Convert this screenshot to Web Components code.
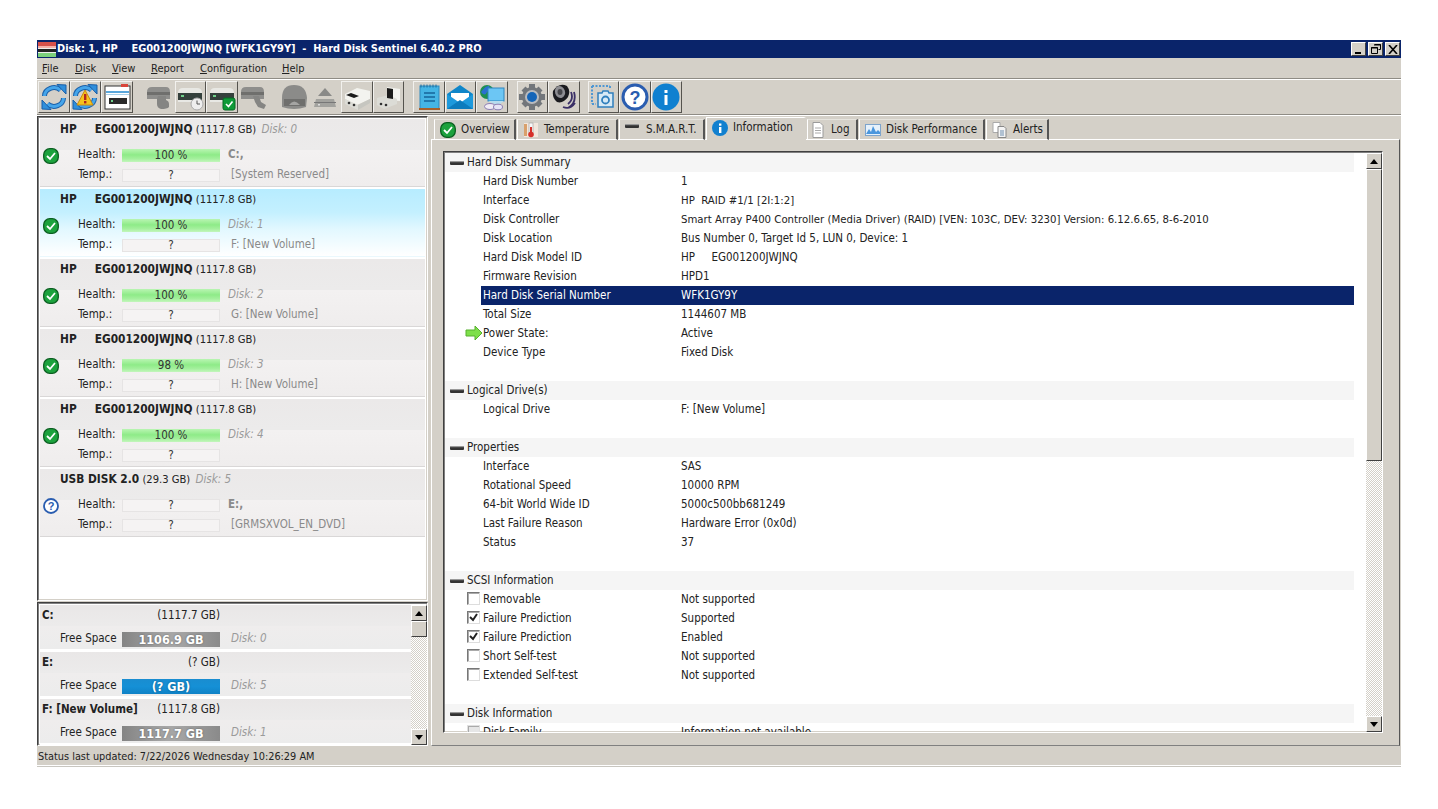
<!DOCTYPE html>
<html><head><meta charset="utf-8"><title>Hard Disk Sentinel</title>
<style>
html,body{margin:0;padding:0;background:#fff;height:100%;overflow:hidden}
body{font:11.5px/1 "DejaVu Sans",Tahoma,sans-serif;font-stretch:condensed;color:#222}
</style></head><body>
<hds-window></hds-window>
<script>
const REFRESH=`<path d="M4.500 13a9.500 8.500 0 0 1 16-6" fill="none" stroke="#1b5fa8" stroke-width="5"/><path d="M4.500 13a9.500 8.500 0 0 1 16-6" fill="none" stroke="#45a5ea" stroke-width="3"/><path d="M17 1.500l9 .5v9z" fill="#2f8fdc" stroke="#1b5fa8"/><path d="M23.500 15a9.500 8.500 0 0 1-16 6" fill="none" stroke="#1b5fa8" stroke-width="5"/><path d="M23.500 15a9.500 8.500 0 0 1-16 6" fill="none" stroke="#45a5ea" stroke-width="3"/><path d="M11 26.500l-9-.5v-9z" fill="#2f8fdc" stroke="#1b5fa8"/>`;
const DRIVE=()=>`<path d="M2 10q0-5 5-5h14q5 0 5 5v9H2z" fill="#e8e8e4"/><rect x="2" y="10" width="24" height="7" fill="#34403c"/><rect x="5" y="12" width="3" height="2" fill="#6fd08a"/>`;
const GDRIVE=`<path d="M2 9q0-5 5-5h14q4 0 4 5v7H2z" fill="#8e8e8c"/><rect x="2" y="9" width="23" height="3" fill="#6f6f6d"/>`;
const ICONS={
 refresh:REFRESH,
 refreshwarn:REFRESH+`<path d="M14 7l8 15H6z" fill="#f6c21c" stroke="#c98a10"/><rect x="13" y="11" width="2.400" height="6" fill="#b3261e"/><rect x="13" y="18" width="2.400" height="2.400" fill="#b3261e"/>`,
 window:`<rect x="2" y="3" width="25" height="23" fill="#fff" stroke="#333"/><rect x="3" y="8" width="23" height="2" fill="#5aa7dc"/><rect x="3" y="11" width="23" height="1" fill="#a8d0ea"/><rect x="6" y="15" width="18" height="6" fill="#2a2a2a"/><rect x="8" y="17" width="2" height="2" fill="#6fd08a"/><path d="M18 1h7v3h-7z" fill="#d8453a"/>`,
 hand:GDRIVE+`<path d="M13 13h8v4q3 1 3 4v3q-2 2-8 2-4-1-4-5v-5z" fill="#858583"/>`,
 clock:DRIVE()+`<circle cx="21" cy="21" r="6" fill="#eee" stroke="#aaa"/><path d="M21 17.500V21h3" fill="none" stroke="#555"/>`,
 check:DRIVE()+`<rect x="15" y="15" width="12" height="12" rx="2" fill="#0d9a37" stroke="#076b24"/><path d="M18 21l2.500 2.500 4-5" fill="none" stroke="#fff" stroke-width="1.600"/>`,
 hand2:GDRIVE+`<path d="M14 13h6l2 6 5 3-2 4-6-2-3-5z" fill="#858583"/>`,
 dome:`<path d="M2 15Q2 2 14 2t13 13l-1 9q-12 4-24 0z" fill="#8b8b89"/><path d="M4 16h21v7H4z" fill="#6f6f6d"/><path d="M9 22q5-7 11 0" fill="#a5a5a3"/>`,
 eject:`<path d="M14 5l7 8H7z" fill="#8a8a88"/><path d="M5 16h18l2 8H3z" fill="#a2a29e"/><rect x="3" y="19" width="22" height="1" fill="#777"/><rect x="7" y="21" width="2" height="1.500" fill="#ddd"/>`,
 tools:`<path d="M2 11l12-6 13 3v8L14 22 2 16z" fill="#f3f3ef"/><path d="M3 12l8 3 5-2-8-3z" fill="#1b1b1b"/><path d="M2 16l13 6v5L2 21z" fill="#dcdcd6"/><path d="M15 22l12-6v4l-12 7z" fill="#c6c6c0"/><circle cx="6" cy="20" r="1.300" fill="#333"/><circle cx="11" cy="22" r="1.300" fill="#333"/>`,
 tools2:`<path d="M13 4l13 2v12l-13-1z" fill="#f3f3ef"/><path d="M3 15l12-3 8 4v5l-13 5-7-4z" fill="#dcdcd6"/><path d="M13 5l6 1v10l-6-1z" fill="#1b1b1b"/><circle cx="7" cy="21" r="1.300" fill="#333"/><circle cx="12" cy="22" r="1.300" fill="#333"/>`,
 note:`<rect x="5" y="3" width="19" height="23" fill="#45b5e5" stroke="#2f89bd"/><path d="M6 1.500v3M9 1.500v3M12 1.500v3M15 1.500v3M18 1.500v3M21 1.500v3" stroke="#1f6f9f"/><path d="M9 10h11M9 14h11M9 18h11" stroke="#16659a" stroke-width="1.500"/><rect x="4" y="25" width="21" height="2" fill="#a8602c"/>`,
 mail:`<path d="M1 11L14 2l13 9v15H1z" fill="#0f86c9"/><path d="M5 10h18v6l-9 6-9-6z" fill="#fff"/><path d="M1 11l13 9 13-9v15H1z" fill="#1d99dc"/><path d="M1 26l13-9 13 9z" fill="#0c7bbd"/>`,
 net:`<circle cx="9" cy="9" r="7" fill="#1f8f4f"/><path d="M3 9q5-7 8-6 2 4-2 6-2 5-6 0z" fill="#2b6fd0"/><rect x="10" y="5" width="16" height="13" fill="#6cc6f4" stroke="#2f86bf"/><path d="M10 18l6 3h6l4-3z" fill="#b8dcee"/><ellipse cx="12" cy="23.500" rx="5.500" ry="3" fill="#f1ecf5" stroke="#8c7fb5"/><ellipse cx="20" cy="24" rx="4.500" ry="2.800" fill="#e6e4f6" stroke="#8c7fb5"/>`,
 gear:`<g fill="#72767b"><circle cx="14" cy="14" r="10"/><path d="M11 1h6v6h-6zM11 21h6v6h-6zM1 11h6v6H1zM21 11h6v6h-6z"/><path d="M3.500 7.500l4-4 4 4-4 4zM16.500 20.500l4-4 4 4-4 4zM3.500 20.500l4-4 4 4-4 4zM16.500 7.500l4-4 4 4-4 4z"/></g><circle cx="14" cy="14" r="7" fill="#b9bbbf"/><circle cx="14" cy="14" r="5" fill="#1565b8"/>`,
 speaker:`<path d="M3 8Q9-1 17 3q4 5 1 11-5 7-11 5Q2 15 3 8z" fill="#1b1b1f"/><ellipse cx="10" cy="9" rx="5" ry="6" fill="#8d8d92" transform="rotate(-20 10 9)"/><ellipse cx="10" cy="9" rx="2.500" ry="3" fill="#46464a"/><path d="M21 9q3 7-3 12M24 9q3 11-6 16M13 24q7 3 12-4" fill="none" stroke="#3a2f66" stroke-width="1.800"/>`,
 camera:`<path d="M3 3h18M3 3v18M3 21h4M21 3v3" stroke="#4f97d3" stroke-width="2" stroke-dasharray="2 1.500" fill="none"/><path d="M9 10h4l1-2h5l1 2h4v14H9z" fill="#d6e9f5" stroke="#2f7fbd" stroke-width="1.500"/><circle cx="16.500" cy="17" r="3.500" fill="none" stroke="#2f7fbd" stroke-width="1.800"/>`,
 help:`<circle cx="14" cy="14" r="12" fill="#fff" stroke="#2a5db0" stroke-width="3"/><text x="14" y="20.500" text-anchor="middle" font-family="Liberation Sans" font-weight="700" font-size="18" fill="#2a5db0">?</text>`,
 info:`<circle cx="14" cy="14" r="13.500" fill="#0f80d0"/><rect x="12.500" y="12" width="3" height="10" fill="#fff"/><rect x="12.500" y="7" width="3" height="3" fill="#fff"/>`,
 ok:`<rect x=".700" y=".700" width="14.600" height="14.600" rx="6" fill="#1ca23d" stroke="#0a5f20" stroke-width="1.300"/><path d="M4 8l3 3 5-6" fill="none" stroke="#fff" stroke-width="1.800"/>`,
 ask:`<circle cx="8" cy="8" r="7" fill="#fff" stroke="#2a5db0" stroke-width="1.800"/><text x="8" y="12" text-anchor="middle" font-family="Liberation Sans" font-weight="700" font-size="11" fill="#2a5db0">?</text>`,
 thermo:`<rect x="1" y="1" width="14" height="14" fill="#f2e6dc"/><rect x="6" y="1" width="4" height="10" fill="#f7f7f7" stroke="#999" stroke-width=".600"/><rect x="7" y="5" width="2" height="7" fill="#d6302a"/><circle cx="8" cy="12.500" r="2.800" fill="#d6302a"/><rect x="1" y="2" width="3" height="12" fill="#d9a06c"/>`,
 bar:`<rect x="0" y="2" width="14" height="4" rx="1" fill="#333"/><rect x="0" y="2" width="14" height="1.200" fill="#999"/>`,
 inf16:`<circle cx="8" cy="8" r="8" fill="#1180cf"/><rect x="7" y="7" width="2.400" height="6" fill="#fff"/><rect x="7" y="3.500" width="2.400" height="2.200" fill="#fff"/>`,
 doc:`<path d="M3 .500h7l3 3v12H3z" fill="#fff" stroke="#9a9a9a"/><path d="M5 6h6M5 8.500h6M5 11h6" stroke="#aaa"/>`,
 chart:`<rect x=".500" y="2.500" width="15" height="11" fill="#e6f1fb" stroke="#7da4cc"/><path d="M1 12l3-5 2 3 2-6 3 6 2-2 2 2v2H1z" fill="#4a96dd"/>`,
 docs:`<path d="M1 .500h7v10H1z" fill="#fff" stroke="#aaa"/><path d="M6 4.500h6l2 2v9H6z" fill="#f4f4f4" stroke="#888"/><path d="M8 9h4M8 11h4M8 13h4" stroke="#6f8fb0"/>`,
 arrow:`<path d="M1 5h9V1l7 7-7 7v-4H1z" fill="#7ee04a" stroke="#57b02e"/>`,
 app:`<rect width="18" height="15" fill="#eee"/><rect width="18" height="4" fill="#d6504a"/><rect y="4" width="18" height="2" fill="#f4b0a8"/><rect y="7" width="18" height="3" fill="#222"/><rect y="11" width="18" height="4" fill="#7cd07c"/>`
};

customElements.define('hds-icon',class extends HTMLElement{
 connectedCallback(){if(this.shadowRoot)return;const s=this.getAttribute('size')||16,n=this.getAttribute('name'),vb=this.getAttribute('vb')||s;const h=this.getAttribute('h')||s;
  this.attachShadow({mode:'open'}).innerHTML=`<style>:host{display:block;flex:none;width:${s}px;height:${h}px}svg{display:block}</style><svg width="${s}" height="${h}" viewBox="0 0 ${vb} ${this.getAttribute('vbh')||vb}">${ICONS[n]||''}</svg>`;}
});

customElements.define('title-bar',class extends HTMLElement{constructor(){super();this.attachShadow({mode:'open'}).innerHTML=`<style>
:host{display:flex;align-items:center;height:18px;background:#0a246a;color:#fff;font-weight:700;font-size:10.950px;padding-left:1px;white-space:pre}
.t{flex:1;padding-left:1px}
.b{width:15px;height:14px;background:#d4d0c8;border:1px solid;border-color:#fff #404040 #404040 #fff;box-sizing:border-box;margin-right:2px;display:flex;align-items:center;justify-content:center}
svg{display:block}
</style><hds-icon name="app" size="18" h="15" vb="18" vbh="15"></hds-icon><span class="t"><slot></slot></span>
<span class="b"><svg width="9" height="9"><rect x="1" y="7" width="6" height="2" fill="#000"/></svg></span>
<span class="b"><svg width="10" height="10"><path d="M3.500.5h6v5h-2M.5 3.500h6v6h-6z" fill="none" stroke="#000"/><path d="M3 1h7M0 4h7" stroke="#000"/></svg></span>
<span class="b" style="margin-right:1px"><svg width="10" height="9"><path d="M1 0l8 9M9 0L1 9" stroke="#000" stroke-width="1.600"/></svg></span>`}});

customElements.define('menu-bar',class extends HTMLElement{constructor(){super();this.attachShadow({mode:'open'}).innerHTML=`<style>
:host{display:flex;height:19px;align-items:center;background:#d4d0c8;padding-left:5px;border-bottom:1px solid #8f8c85;box-shadow:0 1px 0 #fff;font-size:11px;margin-bottom:1px;padding-top:1px}
::slotted(span){display:block}
</style><slot></slot>`}});

customElements.define('tool-bar',class extends HTMLElement{constructor(){super();this.attachShadow({mode:'open'}).innerHTML=`<style>
:host{display:flex;height:35px;align-items:flex-start;background:#d4d0c8;padding:1px 0 0 1px;box-sizing:border-box;border-bottom:1px solid #8f8c85;box-shadow:0 1px 0 #fff;margin-bottom:1px}
</style><slot></slot>`}});

customElements.define('tool-btn',class extends HTMLElement{connectedCallback(){if(this.shadowRoot)return;const d=this.hasAttribute('flat');
 this.attachShadow({mode:'open'}).innerHTML=`<style>
:host{display:flex;align-items:center;justify-content:center;width:31.500px;height:32px;box-sizing:border-box;flex:none;${d?'':'border:1px solid;border-color:#f2f1ee #55534e #55534e #f2f1ee;'}margin-left:${this.getAttribute('gap')||0}px}
</style><hds-icon name="${this.getAttribute('name')}" size="28"></hds-icon>`}});

customElements.define('sunken-box',class extends HTMLElement{constructor(){super();this.attachShadow({mode:'open'}).innerHTML=`<style>
:host{display:flex;min-height:0;box-sizing:border-box;border:1px solid;border-color:#404040 #fff #fff #404040;box-shadow:inset 1px 1px 0 #808080,inset -1px -1px 0 #d4d0c8;padding:2px;background:#fff;overflow:hidden}
</style><slot></slot>`}});

customElements.define('disk-card',class extends HTMLElement{connectedCallback(){if(this.shadowRoot)return;const a=n=>this.getAttribute(n)||'';
 const sel=this.hasAttribute('selected');
 this.attachShadow({mode:'open'}).innerHTML=`<style>
:host{display:grid;grid-template-columns:38px 44px 98px 1fr;grid-template-rows:22px 20px 20px;row-gap:0;padding-bottom:2px;margin-bottom:2px;height:68px;box-sizing:border-box;align-items:center;align-content:start;flex:none;
 background:${sel?'linear-gradient(#b7ecff 0,#c4f0ff 35%,#e2f8ff 60%,#fff 100%)':'linear-gradient(#ebe9e9 0,#ecebeb 46%,#f3f1f1 47%,#efeded 100%)'};border-bottom:1px solid ${sel?'#eaf8fd':'#d9d7d7'}}
.h{grid-column:1/-1;padding-left:20px;white-space:pre;align-self:center}
.h b{font-weight:700;font-size:11.800px}.h .sz{font-size:11.100px}.h i{color:#9a9a9a;margin-left:2px}
.ic{grid-row:2/4;grid-column:1;align-self:start;margin:7px 0 0 3px}
.l{grid-column:2;position:relative;top:4px}.v{grid-column:3;text-align:center;height:13px;line-height:13px;color:#333;position:relative;top:4px}
.g{background:linear-gradient(#b9f5b2,#8eeb88 45%,#a4f09d 75%,#c3f6bc)}
.e{background:#f5f3f3;border:1px solid #e6e4e4;box-sizing:border-box;line-height:11px}
.x{grid-column:4;padding-left:8px;white-space:pre;color:#8a8a8a;position:relative;top:4px}
.x.m{padding-left:11px}.x.b{font-weight:700;padding-left:8px}.x.i{font-style:italic;color:#9a9a9a;padding-left:8px}
</style><div class="h"><b>${a('vendor')}</b><b style="margin-left:${a('vendor')?18:0}px">${a('model')}</b> <span class="sz">${a('size')}</span><i> ${a('disk')}</i></div>
<hds-icon class="ic" name="${a('icon')||'ok'}" size="16"></hds-icon>
<span class="l" style="grid-row:2">Health:</span><span class="v ${a('health')==='?'?'e':'g'}" style="grid-row:2">${a('health')}</span><span class="x ${a('hclass')}" style="grid-row:2">${a('hx')}</span>
<span class="l" style="grid-row:3">Temp.:</span><span class="v e" style="grid-row:3">?</span><span class="x m" style="grid-row:3">${a('tx')}</span>`}});

customElements.define('vol-card',class extends HTMLElement{connectedCallback(){if(this.shadowRoot)return;const a=n=>this.getAttribute(n)||'';
 const blue=this.hasAttribute('blue');
 this.attachShadow({mode:'open'}).innerHTML=`<style>
:host{display:grid;grid-template-columns:21px 61px 98px 1fr;grid-template-rows:22px 22px;height:47px;box-sizing:border-box;align-items:center;flex:none;border-bottom:3px solid #fff;background:linear-gradient(#e9e7e7,#ecebeb 47%,#efeded 48%,#ececec)}
.n{grid-column:1/4;display:flex;justify-content:space-between;padding-left:2px;white-space:pre}
.n b{font-weight:700}
.f{grid-column:1/3;padding-left:20px;white-space:pre;position:relative;top:1px}
.bar{grid-column:3;height:15px;text-align:center;color:#fff;font-weight:700;font-size:12.500px;line-height:15px;position:relative;top:1px;text-shadow:0 0 2px rgba(0,0,0,.4);background:${blue?'linear-gradient(#1a8dd0,#1590d6 50%,#0f82c6)':'linear-gradient(90deg,#848484 0,#a6a6a6 45%,#a6a6a6 55%,#8a8a8a)'}}
.d{grid-column:4;padding-left:11px;font-style:italic;color:#9a9a9a;position:relative;top:1px}
</style><div class="n"><b>${a('name')}</b><span>${a('size')}</span></div><span class="f">Free Space</span><div class="bar">${a('free')}</div><span class="d">${a('disk')}</span>`}});

customElements.define('scroll-bar',class extends HTMLElement{connectedCallback(){if(this.shadowRoot)return;const th=this.getAttribute('thumb');
 this.attachShadow({mode:'open'}).innerHTML=`<style>
:host{display:flex;flex-direction:column;width:16px;flex:none;background-image:conic-gradient(#fff 25%,#d4d0c8 0 50%,#fff 0 75%,#d4d0c8 0);background-size:2px 2px}
.b{height:16px;flex:none;background:#d4d0c8;border:1px solid;border-color:#fff #404040 #404040 #fff;box-sizing:border-box;display:flex;align-items:center;justify-content:center}
.t{height:${th}px;flex:none;background:#d4d0c8;border:1px solid;border-color:#fff #404040 #404040 #fff;box-sizing:border-box}
.s{flex:1}svg{display:block}
</style><div class="b"><svg width="8" height="5"><path d="M4 0l4 5H0z"/></svg></div><div class="t"></div><div class="s"></div><div class="b"><svg width="8" height="5"><path d="M0 0h8L4 5z"/></svg></div>`}});

customElements.define('tab-bar',class extends HTMLElement{constructor(){super();this.attachShadow({mode:'open'}).innerHTML=`<style>
:host{display:flex;height:23px;padding-left:3px;align-items:flex-end;flex:none;position:relative;z-index:1;margin-bottom:-1px}
</style><slot></slot>`}});
customElements.define('tab-item',class extends HTMLElement{connectedCallback(){if(this.shadowRoot)return;const act=this.hasAttribute('active');
 this.attachShadow({mode:'open'}).innerHTML=`<style>
:host{display:flex;align-items:center;box-sizing:border-box;height:${act?23:21}px;width:${this.getAttribute('w')}px;flex:none;padding-left:5px;gap:5px;background:#d4d0c8;border-top:1px solid ${act?'#fff':'#e6e4de'};border-left:1px solid #fff;border-right:2px solid ${act?'#d4d0c8':'#555'};border-bottom:${act?'0':'1px solid #fff'};white-space:pre;margin-right:1px;${act?'padding-bottom:3px;':''}}
hds-icon{margin-left:${this.getAttribute('ml')||0}px}
</style><hds-icon name="${this.getAttribute('icon')}" size="16"></hds-icon><span><slot></slot></span>`}});

customElements.define('info-section',class extends HTMLElement{constructor(){super();this.attachShadow({mode:'open'}).innerHTML=`<style>
:host{display:block;flex:none}
.h{height:19px;background:#f5f5f5;margin:0 0 0 1px;padding-left:5px;display:flex;align-items:center;gap:3px;white-space:pre}
.sp{height:19px}
</style><div class="h"><hds-icon name="bar" size="14" h="8" vb="14" vbh="8"></hds-icon><span id="t"></span></div><slot></slot><div class="sp"></div>`}
 connectedCallback(){this.shadowRoot.getElementById('t').textContent=this.getAttribute('title')}});

customElements.define('info-row',class extends HTMLElement{connectedCallback(){if(this.shadowRoot)return;const a=n=>this.getAttribute(n)||'';const sel=this.hasAttribute('selected'),c=this.getAttribute('check');
 let mark='';
 if(c==='on')mark=`<span class="c"><svg width="11" height="11"><path d="M2 5l3 3 4-6" fill="none" stroke="#222" stroke-width="2"/></svg></span>`;
 else if(c==='off')mark=`<span class="c"></span>`;
 else if(c==='arrow')mark=`<hds-icon class="ar" name="arrow" size="18" vb="18"></hds-icon>`;
 else if(c==='dim')mark=`<span class="c d"></span>`;
 this.attachShadow({mode:'open'}).innerHTML=`<style>
:host{display:grid;grid-template-columns:198px 1fr;height:19px;align-items:center;margin-left:37px;padding-left:2px;position:relative;white-space:pre;${sel?'background:#0a246a;color:#fff;':''}}
.tight{font-size:11.300px}
.c{position:absolute;left:-14px;top:2px;width:13px;height:13px;box-sizing:border-box;border:1px solid;border-color:#777 #ddd #ddd #777;background:#fff;box-shadow:inset 1px 1px 0 #aaa}
.c.d{background:#e6e6e6;border-color:#e0e0e0}svg{display:block;margin:0}
.ar{position:absolute;left:-16px;top:1px}
</style>${mark}<span>${a('label')}</span><span class="${this.hasAttribute('tight')?'tight':''}">${a('value')}</span>`}});

customElements.define('status-bar',class extends HTMLElement{constructor(){super();this.attachShadow({mode:'open'}).innerHTML=`<style>
:host{display:flex;height:19px;box-sizing:border-box;padding-top:2px;align-items:center;background:#d4d0c8;padding-left:1px;font-size:10.850px;border-bottom:1px solid #fff;box-shadow:0 1px 0 #c8c6c0;margin-bottom:1px;margin-top:1px}
</style><slot></slot>`}});

customElements.define('hds-window',class extends HTMLElement{constructor(){super();
 const disks=[
  ['HP','EG001200JWJNQ','(1117.8 GB)','Disk: 0','100 %','C:,','b','[System Reserved]',''],
  ['HP','EG001200JWJNQ','(1117.8 GB)','','100 %','Disk: 1','i','F: [New Volume]','selected'],
  ['HP','EG001200JWJNQ','(1117.8 GB)','','100 %','Disk: 2','i','G: [New Volume]',''],
  ['HP','EG001200JWJNQ','(1117.8 GB)','','98 %','Disk: 3','i','H: [New Volume]',''],
  ['HP','EG001200JWJNQ','(1117.8 GB)','','100 %','Disk: 4','i','',''],
  ['','USB DISK 2.0','(29.3 GB)','Disk: 5','?','E:,','b','[GRMSXVOL_EN_DVD]','']
 ];
 const dh=disks.map((d,i)=>`<disk-card vendor="${d[0]}" model="${d[1]}" size="${d[2]}" disk="${d[3]}" health="${d[4]}" hx="${d[5]}" hclass="${d[6]}" tx="${d[7]}" icon="${i==5?'ask':'ok'}" ${d[8]}></disk-card>`).join('');
 const tools=[['refresh',0],['refreshwarn',0],['window',0],['hand',10.5,1],['clock',0],['check',0],['hand2',0,1],['dome',9,1],['eject',0,1],['tools',0],['tools2',0],['note',9],['mail',0],['net',0],['gear',9],['speaker',0],['camera',8],['help',0],['info',0]];
 const th=tools.map(t=>`<tool-btn name="${t[0]}" gap="${t[1]}" ${t[2]?'flat':''}></tool-btn>`).join('');
 const R=(l,v,x='')=>`<info-row label="${l}" value="${v}" ${x}></info-row>`;
 this.attachShadow({mode:'open'}).innerHTML=`<style>
:host{display:flex;flex-direction:column;width:1364px;height:727px;margin:40px 0 0 37px;background:#d4d0c8}
.main{flex:1;display:flex;min-height:0;gap:3px}
.left{width:391px;flex:none;display:flex;flex-direction:column;gap:1px}
.disks{height:485px;flex:none;flex-direction:column}
.vols{flex:1;padding:2px 0 0 2px}
.vlist{flex:1;display:flex;flex-direction:column;overflow:hidden;min-width:0}
.right{flex:1;display:flex;flex-direction:column;min-width:0;padding-right:1px;margin-top:1px}
.page{flex:1;min-height:0;display:flex;border:1px solid;border-color:#fff #555 #808080 #fff;box-sizing:border-box;padding:11px 16px 12px 11px}
.lst{flex:1;padding:1px 0 0 0}
.rows{flex:1;min-width:0;overflow:hidden;padding-right:12px;display:flex;flex-direction:column}
</style>
<title-bar>Disk: 1, HP    EG001200JWJNQ [WFK1GY9Y]  -  Hard Disk Sentinel 6.40.2 PRO</title-bar>
<menu-bar><span style="width:33px"><u>F</u>ile</span><span style="width:37px"><u>D</u>isk</span><span style="width:39px"><u>V</u>iew</span><span style="width:49px"><u>R</u>eport</span><span style="width:82px"><u>C</u>onfiguration</span><span><u>H</u>elp</span></menu-bar>
<tool-bar>${th}</tool-bar>
<div class="main">
 <div class="left">
  <sunken-box class="disks">${dh}</sunken-box>
  <sunken-box class="vols"><div class="vlist">
   <vol-card name="C:" size="(1117.7 GB)" free="1106.9 GB" disk="Disk: 0"></vol-card>
   <vol-card name="E:" size="(? GB)" free="(? GB)" disk="Disk: 5" blue></vol-card>
   <vol-card name="F: [New Volume]" size="(1117.8 GB)" free="1117.7 GB" disk="Disk: 1"></vol-card>
  </div><scroll-bar thumb="16"></scroll-bar></sunken-box>
 </div>
 <div class="right">
  <tab-bar>
   <tab-item w="82" icon="ok">Overview</tab-item><tab-item w="101" icon="thermo">Temperature</tab-item><tab-item w="86" icon="bar">S.M.A.R.T.</tab-item><tab-item w="100" icon="inf16" active>Information</tab-item><tab-item w="51" icon="doc" ml="-3">Log</tab-item><tab-item w="126" icon="chart">Disk Performance</tab-item><tab-item w="63" icon="docs">Alerts</tab-item>
  </tab-bar>
  <div class="page"><sunken-box class="lst"><div class="rows">
   <info-section title="Hard Disk Summary">
    ${R('Hard Disk Number','1')}${R('Interface','HP  RAID #1/1 [2I:1:2]','tight')}${R('Disk Controller','Smart Array P400 Controller (Media Driver) (RAID) [VEN: 103C, DEV: 3230] Version: 6.12.6.65, 8-6-2010','tight')}${R('Disk Location','Bus Number 0, Target Id 5, LUN 0, Device: 1')}${R('Hard Disk Model ID','HP     EG001200JWJNQ')}${R('Firmware Revision','HPD1')}${R('Hard Disk Serial Number','WFK1GY9Y','selected')}${R('Total Size','1144607 MB')}${R('Power State:','Active','check="arrow"')}${R('Device Type','Fixed Disk')}
   </info-section>
   <info-section title="Logical Drive(s)">${R('Logical Drive','F: [New Volume]')}</info-section>
   <info-section title="Properties">${R('Interface','SAS')}${R('Rotational Speed','10000 RPM')}${R('64-bit World Wide ID','5000c500bb681249')}${R('Last Failure Reason','Hardware Error (0x0d)')}${R('Status','37')}</info-section>
   <info-section title="SCSI Information">${R('Removable','Not supported','check="off"')}${R('Failure Prediction','Supported','check="on"')}${R('Failure Prediction','Enabled','check="on"')}${R('Short Self-test','Not supported','check="off"')}${R('Extended Self-test','Not supported','check="off"')}</info-section>
   <info-section title="Disk Information">${R('Disk Family','Information not available','check="dim"')}</info-section>
  </div><scroll-bar thumb="292"></scroll-bar></sunken-box></div>
 </div>
</div>
<status-bar>Status last updated: 7/22/2026 Wednesday 10:26:29 AM</status-bar>`}});
</script></body></html>
